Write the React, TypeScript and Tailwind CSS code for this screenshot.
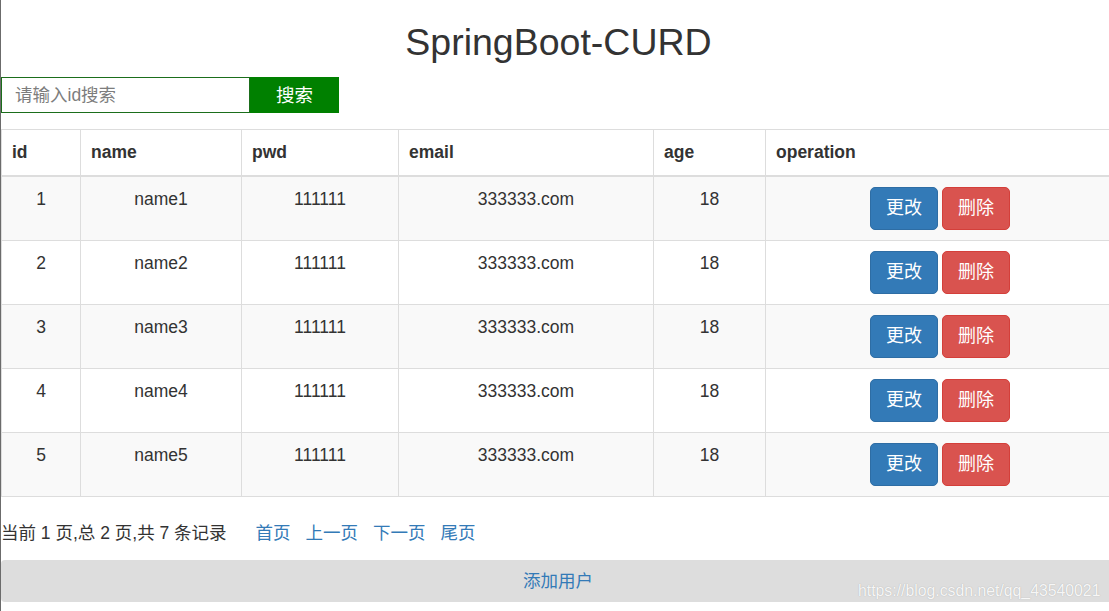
import React from "react";

const rows = [1, 2, 3, 4, 5];

export default function App() {
  const font = { fontFamily: '"Liberation Sans", Arial, "Noto Sans CJK SC", sans-serif' };
  return (
    <div className="w-[1109px] h-[611px] overflow-hidden bg-white" style={font}>
      <div className="relative w-[1116px] h-[611px] border-l border-[#6b6b6b] text-[#333] text-[17.5px] leading-[25px]">
        <h2 className="pt-[22px] text-center text-[37.5px] leading-[41px] font-normal text-[#333]">SpringBoot-CURD</h2>
        <div className="mt-[14px] flex h-[36px]">
          <input
            className="w-[249px] h-[36px] border border-[#1b6e1b] pl-[13px] text-[17.5px] outline-none placeholder:text-[#7d7d7d]"
            placeholder="请输入id搜索"
          />
          <button className="w-[89px] h-[36px] bg-[#008000] text-white text-[18.5px]">搜索</button>
        </div>
        <table className="mt-[16px] w-[1113px] table-fixed border-collapse">
          <colgroup>
            <col className="w-[79px]" />
            <col className="w-[161px]" />
            <col className="w-[157px]" />
            <col className="w-[255px]" />
            <col className="w-[112px]" />
            <col className="w-[349px]" />
          </colgroup>
          <thead>
            <tr>
              {["id", "name", "pwd", "email", "age", "operation"].map((h) => (
                <th
                  key={h}
                  className="border border-[#ddd] border-b-[2px] px-[10px] py-[10px] text-left font-bold leading-[25px]"
                >
                  {h}
                </th>
              ))}
            </tr>
          </thead>
          <tbody>
            {rows.map((i) => (
              <tr key={i} className={i % 2 === 1 ? "bg-[#f9f9f9]" : "bg-white"}>
                {[String(i), "name" + i, "111111", "333333.com", "18"].map((c, k) => (
                  <td key={k} className="border border-[#ddd] px-[10px] py-[10px] text-center align-top leading-[25px]">
                    {c}
                  </td>
                ))}
                <td className="border border-[#ddd] px-[10px] py-[10px] text-center align-top">
                  <div className="flex justify-center gap-[4px]">
                    <button className="w-[68px] h-[43px] rounded-[5px] border border-[#2e6da4] bg-[#337ab7] text-white text-[18px]">
                      更改
                    </button>
                    <button className="w-[68px] h-[43px] rounded-[5px] border border-[#d43f3a] bg-[#d9534f] text-white text-[18px]">
                      删除
                    </button>
                  </div>
                </td>
              </tr>
            ))}
          </tbody>
        </table>
        <div className="mt-[24px] flex items-center h-[25px]">
          <span>当前 1 页,总 2 页,共 7 条记录</span>
          <a className="ml-[29px] text-[#337ab7]">首页</a>
          <a className="ml-[15px] text-[#337ab7]">上一页</a>
          <a className="ml-[15px] text-[#337ab7]">下一页</a>
          <a className="ml-[15px] text-[#337ab7]">尾页</a>
        </div>
        <div className="mt-[14px] h-[42px] w-[1114px] rounded-[4px] bg-[#dddddd] flex items-center justify-center text-[#337ab7]">
          添加用户
        </div>
        <div className="absolute left-[857px] top-[581px] text-[15.8px] leading-[20px] text-white/90 [text-shadow:0_0_1px_rgba(120,120,120,0.6)]">
          https://blog.csdn.net/qq_43540021
        </div>
      </div>
    </div>
  );
}
